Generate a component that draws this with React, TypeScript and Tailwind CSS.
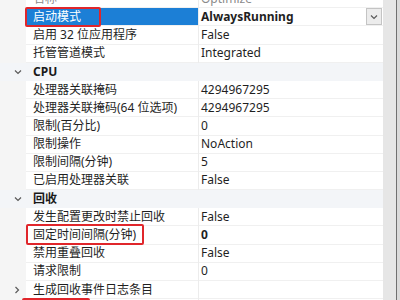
type Row =
  | { kind: "category"; label: string }
  | {
      kind: "prop";
      name: string;
      value: string;
      bold?: boolean;
      readOnly?: boolean;
      selected?: boolean;
      expandable?: boolean;
      dropdown?: boolean;
      marked?: "start" | "fixed" | "next";
    };

const rows: Row[] = [
  { kind: "prop", name: "名称", value: "Optimize", readOnly: true },
  { kind: "prop", name: "启动模式", value: "AlwaysRunning", bold: true, selected: true, dropdown: true, marked: "start" },
  { kind: "prop", name: "启用 32 位应用程序", value: "False" },
  { kind: "prop", name: "托管管道模式", value: "Integrated" },
  { kind: "category", label: "CPU" },
  { kind: "prop", name: "处理器关联掩码", value: "4294967295" },
  { kind: "prop", name: "处理器关联掩码(64 位选项)", value: "4294967295" },
  { kind: "prop", name: "限制(百分比)", value: "0" },
  { kind: "prop", name: "限制操作", value: "NoAction" },
  { kind: "prop", name: "限制间隔(分钟)", value: "5" },
  { kind: "prop", name: "已启用处理器关联", value: "False" },
  { kind: "category", label: "回收" },
  { kind: "prop", name: "发生配置更改时禁止回收", value: "False" },
  { kind: "prop", name: "固定时间间隔(分钟)", value: "0", bold: true, marked: "fixed" },
  { kind: "prop", name: "禁用重叠回收", value: "False" },
  { kind: "prop", name: "请求限制", value: "0" },
  { kind: "prop", name: "生成回收事件日志条目", value: "", expandable: true },
  { kind: "prop", name: "特定时间", value: "", expandable: true, marked: "next" },
];

const font = { fontFamily: '"Noto Sans", "Noto Sans CJK SC", sans-serif' };

function Chevron({ open }: { open: boolean }) {
  return (
    <svg viewBox="0 0 8 8" className="h-[8px] w-[8px]" fill="none" stroke="#5a5a5a" strokeWidth="1.2">
      {open ? <path d="M1 2.5 4 5.5 7 2.5" /> : <path d="M2.5 1 5.5 4 2.5 7" />}
    </svg>
  );
}

function Mark({ which }: { which: "start" | "fixed" | "next" }) {
  if (which === "start") {
    return <div className="pointer-events-none absolute left-[-1px] top-[-1px] h-[20px] w-[76px] rounded-[2px] border-2 border-[#e0262b]" />;
  }
  if (which === "fixed") {
    return <div className="pointer-events-none absolute left-[0px] top-[-2px] h-[21px] w-[118px] rounded-[2px] border-2 border-[#e0262b]" />;
  }
  return <div className="pointer-events-none absolute left-[-4px] top-[-1px] h-[20px] w-[68px] rounded-[2px] border-2 border-[#e0262b]" />;
}

function PropertyRow({ row }: { row: Row }) {
  if (row.kind === "category") {
    return (
      <div className="flex h-[18.2px] items-center bg-[#f3f5f8]">
        <div className="flex w-[26px] shrink-0 items-center justify-end pr-[4px]">
          <Chevron open />
        </div>
        <span className="pl-[7px] text-[12px] font-bold text-[#1a1a1a]">{row.label}</span>
      </div>
    );
  }
  return (
    <div className="flex h-[18.2px] items-stretch">
      <div className="flex w-[26px] shrink-0 items-center justify-end bg-[#f5f5f5] pr-[5px]">
        {row.expandable && <Chevron open={false} />}
      </div>
      <div
        className={
          "relative flex w-[172px] shrink-0 items-center border-b border-[#f0f0f0] pl-[7px] text-[12px] whitespace-nowrap " +
          (row.selected ? "bg-[#1c7fd6] text-white" : row.readOnly ? "text-[#8a8a8a]" : "text-[#1f1f1f]")
        }
      >
        {row.name}
        {row.marked && <Mark which={row.marked} />}
      </div>
      <div className="w-px shrink-0 bg-[#ececec]" />
      <div
        className={
          "flex flex-1 items-center justify-between border-b border-[#f0f0f0] pl-[2px] text-[12px] " +
          (row.bold ? "font-bold " : "") +
          (row.readOnly ? "text-[#8a8a8a]" : "text-[#1f1f1f]")
        }
      >
        <span>{row.value}</span>
        {row.dropdown && (
          <div className="mr-[1px] flex h-[17px] w-[16px] items-center justify-center border border-[#c4c4c4] bg-[#ececec]">
            <Chevron open />
          </div>
        )}
      </div>
    </div>
  );
}

export default function App() {
  return (
    <div className="flex h-[300px] w-[400px] overflow-hidden bg-white" style={font}>
      <div className="flex-1 overflow-hidden">
        <div className="-mt-[10px]">
          {rows.map((row, i) => (
            <PropertyRow key={i} row={row} />
          ))}
        </div>
      </div>
      <div className="w-[13px] shrink-0 bg-[#e6e6e6]" />
      <div className="w-px shrink-0 bg-[#707070]" />
      <div className="w-[3px] shrink-0 bg-[#dadada]" />
    </div>
  );
}
